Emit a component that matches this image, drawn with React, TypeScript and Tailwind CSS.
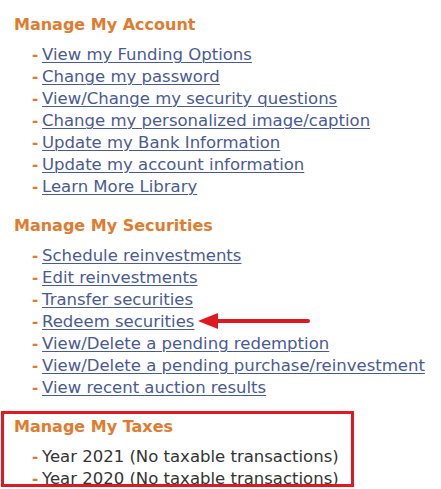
import React from "react";

const font = { fontFamily: '"DejaVu Sans", Verdana, sans-serif' };

function Item({ text, link = true }: { text: string; link?: boolean }) {
  return (
    <li className="flex items-baseline h-[22px] leading-[22px]">
      <span className="text-[#e8772a] w-[10px] font-bold text-[15px]">-</span>
      {link ? (
        <a href="#" className="text-[#4a5a94] underline underline-offset-[2px] decoration-1">
          {text}
        </a>
      ) : (
        <span className="text-[#333333]">{text}</span>
      )}
    </li>
  );
}

function Section({ title, items, link = true }: { title: string; items: string[]; link?: boolean }) {
  return (
    <div>
      <h2 className="text-[16px] font-bold text-[#e07b2f] leading-[22px] pl-[14px]">{title}</h2>
      <ul className="pl-[32px] mt-[8px] text-[16.5px]">
        {items.map((t) => (
          <Item key={t} text={t} link={link} />
        ))}
      </ul>
    </div>
  );
}

export default function App() {
  return (
    <div className="relative w-[441px] h-[489px] bg-white overflow-hidden pt-[14px]" style={font}>
      <div className="flex flex-col gap-[17px]">
        <Section
          title="Manage My Account"
          items={[
            "View my Funding Options",
            "Change my password",
            "View/Change my security questions",
            "Change my personalized image/caption",
            "Update my Bank Information",
            "Update my account information",
            "Learn More Library",
          ]}
        />
        <Section
          title="Manage My Securities"
          items={[
            "Schedule reinvestments",
            "Edit reinvestments",
            "Transfer securities",
            "Redeem securities",
            "View/Delete a pending redemption",
            "View/Delete a pending purchase/reinvestment",
            "View recent auction results",
          ]}
        />
        <Section
          title="Manage My Taxes"
          link={false}
          items={["Year 2021 (No taxable transactions)", "Year 2020 (No taxable transactions)"]}
        />
      </div>
      <div className="absolute left-[1px] top-[411px] w-[353px] h-[76px] border-[3px] border-[#e01820]" />
      <svg className="absolute left-[196px] top-[312px]" width="114" height="18" viewBox="0 0 114 18">
        <line x1="16" y1="9" x2="112" y2="9" stroke="#e01820" strokeWidth="4" strokeLinecap="round" />
        <polygon points="2,9 22,1 22,17" fill="#e01820" />
      </svg>
    </div>
  );
}
